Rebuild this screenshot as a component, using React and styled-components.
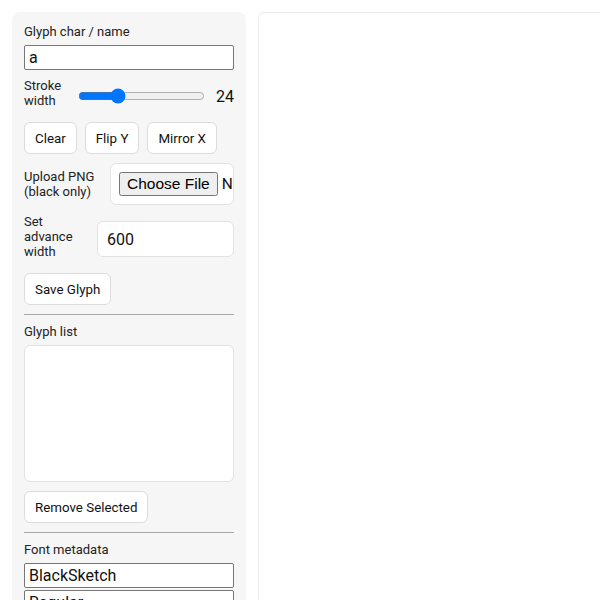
import React from 'react';
import styled, { createGlobalStyle } from 'styled-components';

const GlobalStyle = createGlobalStyle`
  * {
    box-sizing: border-box;
  }
  body {
    margin: 0;
    background: #fff;
    font-family: Roboto, "Liberation Sans", sans-serif;
    color: #111;
    overflow: hidden;
  }
`;

const Layout = styled.div`
  display: grid;
  grid-template-columns: 234px 760px;
  gap: 12px;
  padding: 12px;
  align-items: start;
`;

const Sidebar = styled.aside`
  background: #f6f6f6;
  border-radius: 8px;
  padding: 12px 12px 40px;
  display: flex;
  flex-direction: column;
`;

const CanvasPanel = styled.section`
  background: #fff;
  border: 1px solid #ececec;
  border-radius: 6px;
  height: 700px;
`;

const Label = styled.label`
  display: block;
  font-size: 13px;
  line-height: 15px;
  color: #222;
  margin: ${(p) => p.$m || '0 0 6px'};
`;

const RowLabel = styled.label`
  font-size: 13px;
  line-height: 15px;
  color: #222;
  width: ${(p) => p.$w}px;
  flex: none;
`;

const TextInput = styled.input`
  display: block;
  width: 100%;
  height: 25px;
  font-family: Roboto, "Liberation Sans", sans-serif;
  font-size: 16px;
  padding: 1px 4px;
  border: 1px solid #767676;
  border-radius: 2px;
  background: #fff;
  color: #111;
  margin-bottom: 2px;
`;

const Row = styled.div`
  display: flex;
  align-items: ${(p) => p.$align || 'center'};
  gap: ${(p) => p.$gap || 8}px;
  margin-top: ${(p) => p.$mt || 8}px;
`;

const Slider = styled.input`
  width: 127px;
  margin: 6px 0 0;
  flex: none;
`;

const Value = styled.span`
  font-size: 16px;
  margin: 6px 0 0 3px;
`;

const Button = styled.button`
  height: 32px;
  padding: 0 10px;
  background: #fff;
  border: 1px solid #dcdcdc;
  border-radius: 6px;
  font-family: Roboto, "Liberation Sans", sans-serif;
  font-size: 13.333px;
  color: #111;
  flex: none;
`;

const SoloButton = styled(Button)`
  align-self: flex-start;
  margin-top: ${(p) => p.$mt || 9}px;
`;

const FileBox = styled.div`
  flex: 1;
  height: 42px;
  background: #fff;
  border: 1px solid #e2e2e2;
  border-radius: 6px;
  padding: 0 8px;
  display: flex;
  align-items: center;
  overflow: hidden;
  input {
    font-family: Roboto, "Liberation Sans", sans-serif;
    font-size: 15.5px;
  }
`;

const NumberBox = styled.input`
  flex: 1;
  min-width: 0;
  height: 36px;
  margin-top: 7px;
  background: #fff;
  border: 1px solid #e2e2e2;
  border-radius: 6px;
  padding: 0 9px;
  font-family: Roboto, "Liberation Sans", sans-serif;
  font-size: 16px;
  color: #111;
`;

const Divider = styled.hr`
  border: none;
  border-top: 1px solid #a8a8a8;
  margin: 9px 0 9px;
  width: 100%;
`;

const ListBox = styled.select`
  width: 100%;
  height: 137px;
  background: #fff;
  border: 1px solid #e2e2e2;
  border-radius: 6px;
`;

const App = () => {
  return (
    <>
      <GlobalStyle />
      <Layout>
        <Sidebar>
          <Label>Glyph char / name</Label>
          <TextInput defaultValue="a" />
          <Row $mt={6}>
            <RowLabel $w={46}>Stroke width</RowLabel>
            <Slider type="range" min="1" max="80" defaultValue="24" />
            <Value>24</Value>
          </Row>
          <Row $mt={14} $gap={8}>
            <Button>Clear</Button>
            <Button>Flip Y</Button>
            <Button>Mirror X</Button>
          </Row>
          <Row $mt={9}>
            <RowLabel $w={78}>Upload PNG (black only)</RowLabel>
            <FileBox>
              <input type="file" accept="image/png" />
            </FileBox>
          </Row>
          <Row $mt={9} $align="flex-start">
            <RowLabel $w={65}>Set advance width</RowLabel>
            <NumberBox type="number" defaultValue="600" />
          </Row>
          <SoloButton $mt={14}>Save Glyph</SoloButton>
          <Divider />
          <Label>Glyph list</Label>
          <ListBox multiple />
          <SoloButton $mt={9}>Remove Selected</SoloButton>
          <Divider />
          <Label>Font metadata</Label>
          <TextInput defaultValue="BlackSketch" />
          <TextInput defaultValue="Regular" />
        </Sidebar>
        <CanvasPanel />
      </Layout>
    </>
  );
};

export default App;
